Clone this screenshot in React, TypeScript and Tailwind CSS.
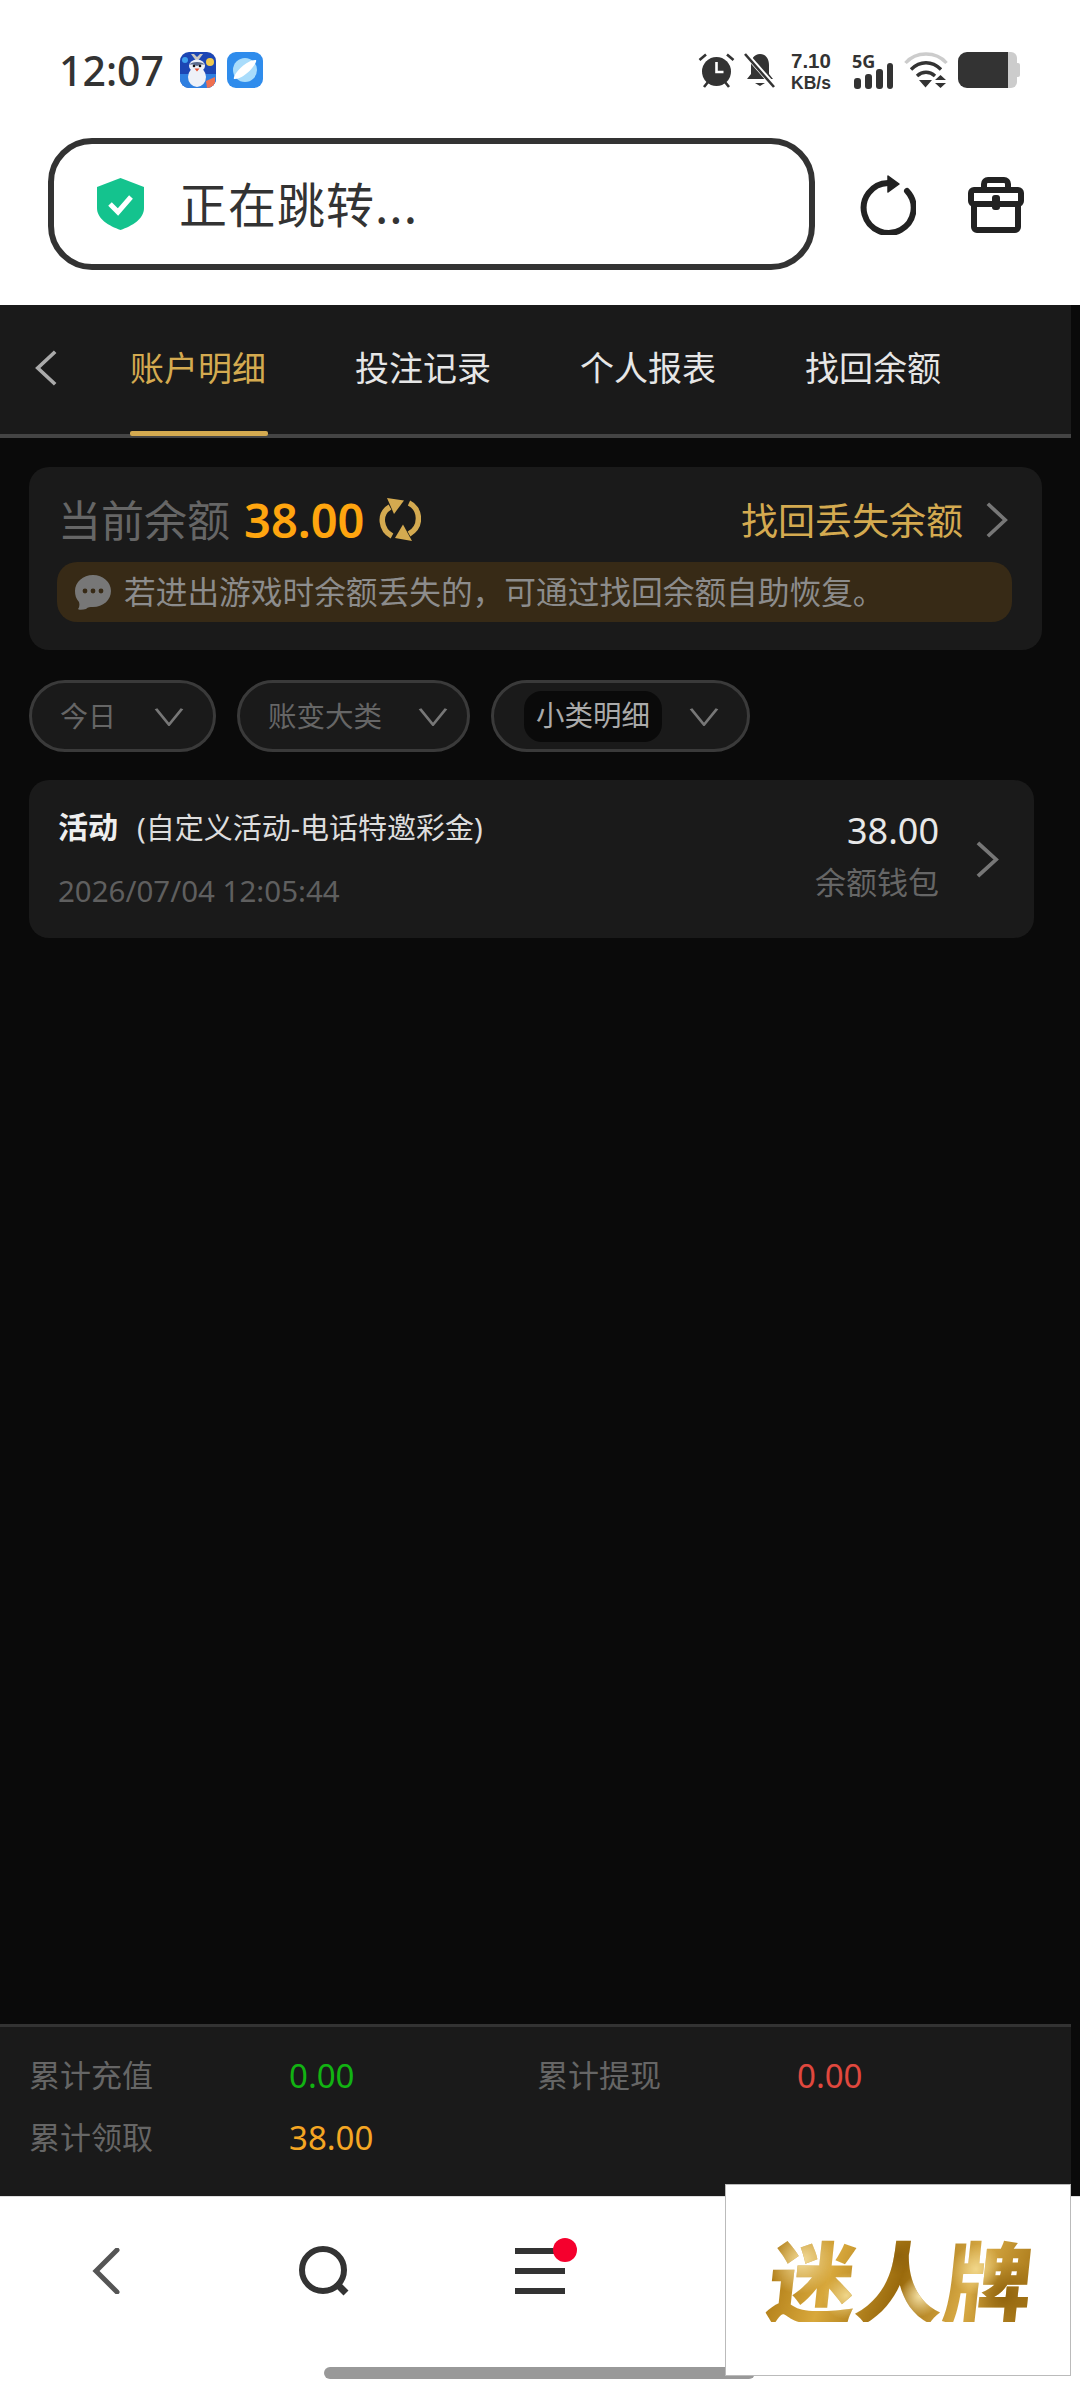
const Chevron = ({ dir = 'right', className = '' }: { dir?: 'left' | 'right' | 'down'; className?: string }) => {
  const points = dir === 'left' ? '22,2 3,20 22,38' : dir === 'right' ? '2,2 21,20 2,38' : '2,4 15,28 28,4'
  const box = dir === 'down' ? '0 0 30 30' : '0 0 24 40'
  return (
    <svg viewBox={box} preserveAspectRatio="none" className={className} fill="none" stroke="currentColor" strokeWidth={dir === 'down' ? 3 : 4}>
      <polyline points={points} />
    </svg>
  )
}

const tabs = ['账户明细', '投注记录', '个人报表', '找回余额']

function PenguinIcon() {
  return (
    <svg viewBox="0 0 36 36" className="w-[36px] h-[36px] rounded-[9px]">
      <rect width="36" height="36" fill="#1c46b4" />
      <rect y="22" width="36" height="14" fill="#2f7fe0" />
      <circle cx="30" cy="10" r="4" fill="#f0c94f" />
      <circle cx="5" cy="8" r="3" fill="#3fa0ee" />
      <path d="M26 29l9-4v11h-8z" fill="#ef7050" />
      <path d="M11 2l6 8 6-8-3 0-3 3-3-3z" fill="#c9c6c0" />
      <ellipse cx="17" cy="25" rx="9" ry="10" fill="#eef1f8" />
      <ellipse cx="17" cy="14" rx="8" ry="6.500" fill="#eef1f8" />
      <path d="M9 13c2-4 14-4 16 0-3-1-5 0-8 1-3-1-5-2-8-1z" fill="#5a6a8c" />
      <circle cx="14" cy="14" r="1.300" fill="#111" />
      <circle cx="20" cy="14" r="1.300" fill="#111" />
      <path d="M14.500 16.500h5l-2.500 3z" fill="#e8502f" />
    </svg>
  )
}

function PlanetIcon() {
  return (
    <svg viewBox="0 0 36 36" className="w-[36px] h-[36px] rounded-[9px] ml-[11px]">
      <rect width="36" height="36" fill="#2f8cec" />
      <circle cx="18" cy="18" r="12" fill="#a9dcfb" />
      <path d="M7 27C5 23 20 7 29 8c2 3-12 20-22 19z" fill="#fff" />
    </svg>
  )
}

function StatusIcons() {
  return (
    <div className="ml-auto mr-[60px] flex items-center text-[#333]">
      {/* alarm */}
      <svg viewBox="0 0 37 36" className="w-[37px] h-[36px]">
        <circle cx="18.500" cy="19.500" r="14.500" fill="#333" />
        <path d="M18.500 10v10h7" fill="none" stroke="#fff" strokeWidth="2.600" />
        <path d="M1.500 8L8 2.500M35.500 8L29 2.500M6 35l4-5M31 35l-4-5" stroke="#333" strokeWidth="2.600" />
      </svg>
      {/* muted bell */}
      <svg viewBox="0 0 32 36" className="w-[32px] h-[36px] ml-[9px]">
        <path d="M16 2c6 0 9 5 9 11v9l4 5H3l4-5v-9C7 7 10 2 16 2z" fill="#333" />
        <path d="M11 31h10l-5 3z" fill="#333" />
        <path d="M1 1l29 33" stroke="#fff" strokeWidth="5" />
        <path d="M1 2l29 33" stroke="#333" strokeWidth="2.600" />
      </svg>
      <div className="ml-[15px] w-[44px] pt-[2px] flex flex-col items-start font-bold font-['Liberation_Sans',sans-serif]">
        <span className="text-[20.500px] h-[20px] leading-[20px]">7.10</span>
        <span className="text-[17.500px] h-[18px] leading-[18px] mt-[3px]">KB/s</span>
      </div>
      <div className="ml-[17px] w-[40px] h-[37px] relative">
        <span className="absolute left-0 top-0 text-[18px] leading-[18px] font-bold">5G</span>
        <svg viewBox="0 0 40 26" className="absolute left-[2px] bottom-0 w-[40px] h-[26px]">
          <rect x="0" y="15" width="7" height="11" rx="3" fill="#333" />
          <rect x="11" y="11" width="7" height="15" rx="3" fill="#333" />
          <rect x="22" y="6" width="7" height="20" rx="3" fill="#333" />
          <rect x="33" y="0" width="6" height="26" rx="3" fill="#333" />
        </svg>
      </div>
      {/* wifi */}
      <svg viewBox="0 0 44 36" className="w-[44px] h-[36px] ml-[12px]" fill="none">
        <path d="M1.500 11C12-1 32-1 42.500 11" stroke="#ccc" strokeWidth="3.400" />
        <path d="M7 17.500c9-9 21-9 30 0" stroke="#333" strokeWidth="3.400" />
        <path d="M13 24c5.500-5 12.500-5 18 0" stroke="#333" strokeWidth="3.400" />
        <path d="M15 28h13l-6.500 7.500zM31 31h11l-5.500 5zM31 28h11l-5.500-5z" fill="#333" />
      </svg>
      {/* battery */}
      <div className="ml-[10px] flex items-center">
        <div className="w-[50px] h-[36px] bg-[#333] rounded-l-[9px]" />
        <div className="w-[9px] h-[36px] bg-[#ccc] rounded-r-[6px]" />
        <div className="w-[3px] h-[14px] bg-[#ccc] rounded-r-[2px]" />
      </div>
    </div>
  )
}

export default function App() {
  return (
    <div className="relative w-[1080px] h-[2400px] overflow-hidden flex flex-col bg-[#0a0a0a] font-['Noto_Sans','Noto_Sans_CJK_SC',sans-serif]">
      {/* browser top */}
      <div className="bg-white h-[305px] shrink-0">
        <div className="h-[140px] flex items-center pl-[59px]">
          <span className="text-[41px] font-medium text-[#333] leading-none mr-[16px]">12:07</span>
          <PenguinIcon />
          <PlanetIcon />
          <StatusIcons />
        </div>
        <div className="flex items-center pl-[48px]">
          <div className="w-[767px] h-[132px] -mt-[2px] border-[6px] border-[#333] rounded-[44px] flex items-center pl-[43px]">
            <svg viewBox="0 0 47 52" className="w-[47px] h-[52px]">
              <path d="M23.500 0L47 9v21c0 11-12 18-23.500 22C12 48 0 41 0 30V9z" fill="#14c38e" />
              <path d="M13 26l8 8 13-15" fill="none" stroke="#fff" strokeWidth="5" />
            </svg>
            <span className="ml-[35px] pb-[5px] text-[48px] leading-none tracking-[1px] text-[#333] font-['Noto_Sans_CJK_SC',sans-serif]">正在跳转...</span>
          </div>
          <svg viewBox="0 0 56 60" className="w-[56px] h-[60px] ml-[45px]" fill="none">
            <path d="M47 16A25 25 0 1 1 28 8" stroke="#222" strokeWidth="6" strokeLinecap="round" />
            <path d="M28 1l11 8-11 8z" fill="#222" stroke="#222" strokeWidth="1.500" strokeLinejoin="round" />
          </svg>
          <svg viewBox="0 0 56 56" className="w-[56px] h-[56px] ml-[52px]" fill="none" stroke="#222" strokeWidth="6">
            <path d="M16 11V7a4 4 0 0 1 4-4h16a4 4 0 0 1 4 4v4" />
            <rect x="3" y="13" width="50" height="14" rx="3" />
            <path d="M6 27v23a3 3 0 0 0 3 3h38a3 3 0 0 0 3-3V27" />
            <rect x="24" y="18" width="8" height="15" rx="3" fill="#222" stroke="none" />
          </svg>
        </div>
      </div>

      {/* tabs */}
      <div className="relative h-[133px] shrink-0 w-[1071px] bg-[#1a1a1a] border-b-[4px] border-[#444] flex items-center pb-[3px]">
        <Chevron dir="left" className="ml-[35px] w-[22px] h-[36px] text-[#aaa]" />
        <div className="ml-[73px] flex gap-[89px]">
          {tabs.map((tab, i) => (
            <span key={tab} className={`w-[136px] text-[34px] leading-none whitespace-nowrap ${i === 0 ? 'text-[#d4aa50]' : 'text-[#e6e6e6]'}`}>
              {tab}
            </span>
          ))}
        </div>
        <div className="absolute left-[130px] -bottom-[2px] w-[138px] h-[5px] rounded-[2px] bg-[#d4aa50]" />
      </div>

      {/* content */}
      <div className="flex-1 pl-[29px]">
        <div className="mt-[29px] w-[1013px] h-[183px] rounded-[20px] bg-[#1a1a1a] px-[29px] pt-[30px]">
          <div className="flex items-center h-[46px]">
            <span className="text-[43px] leading-none text-[#666]">当前余额</span>
            <span className="ml-[14px] text-[47px] leading-none font-semibold text-[#ffa50f]">38.00</span>
            <svg viewBox="0 0 42 44" className="ml-[14px] w-[42px] h-[44px] shrink-0" fill="none">
              <path d="M13 38C2 32-1 16 11 9" stroke="#d4aa50" strokeWidth="5.500" />
              <path d="M8 0l17 2.500L15 16z" fill="#d4aa50" />
              <path d="M30 5c11 5 14 23 0 31" stroke="#d4aa50" strokeWidth="5.500" />
              <path d="M33 43l-17-3 8-13.500z" fill="#d4aa50" />
            </svg>
            <span className="ml-auto text-[37px] leading-none text-[#d4aa50]">找回丢失余额</span>
            <Chevron className="ml-[23px] mr-[5px] w-[22px] h-[36px] text-[#777]" />
          </div>
          <div className="mt-[19px] w-[955px] -ml-[1px] h-[60px] rounded-[20px] bg-[#372a16] flex items-center pl-[17px]">
            <svg viewBox="0 0 38 36" className="w-[38px] h-[36px]">
              <path d="M19 1c10 0 18 7 18 16s-8 16-18 16c-3 0-5 0-7 2-3 1-8 1-8 0 1-1 2-4 1-7C2 25 1 21 1 17 1 8 9 1 19 1z" fill="#777" />
              <circle cx="11" cy="17" r="2.400" fill="#372a16" />
              <circle cx="19" cy="17" r="2.400" fill="#372a16" />
              <circle cx="27" cy="17" r="2.400" fill="#372a16" />
            </svg>
            <span className="ml-[12px] text-[31.700px] leading-none text-[#8c8c8c] whitespace-nowrap">若进出游戏时余额丢失的，可通过找回余额自助恢复。</span>
          </div>
        </div>

        {/* filters */}
        <div className="mt-[30px] flex gap-[21px]">
          <div className="w-[187px] h-[72px] rounded-[36px] border-[3px] border-[#3a3a3a] bg-[#1a1a1a] flex items-center pl-[28px]">
            <span className="text-[28px] leading-none text-[#666]">今日</span>
            <Chevron dir="down" className="ml-[38px] w-[30px] h-[20px] text-[#777]" />
          </div>
          <div className="w-[233px] h-[72px] rounded-[36px] border-[3px] border-[#3a3a3a] bg-[#1a1a1a] flex items-center pl-[28px]">
            <span className="text-[28.500px] leading-none text-[#666]">账变大类</span>
            <Chevron dir="down" className="ml-[36px] w-[30px] h-[20px] text-[#777]" />
          </div>
          <div className="w-[259px] h-[72px] rounded-[36px] border-[3px] border-[#3a3a3a] bg-[#1a1a1a] flex items-center pl-[30px]">
            <span className="w-[138px] h-[51px] rounded-[18px] bg-[#0a0a0a] flex items-center justify-center text-[28.500px] leading-none text-[#aaa] pb-[2px]">小类明细</span>
            <Chevron dir="down" className="ml-[27px] w-[30px] h-[20px] text-[#777]" />
          </div>
        </div>

        {/* record */}
        <div className="mt-[28px] w-[1005px] h-[158px] rounded-[20px] bg-[#1a1a1a] flex items-center pl-[29px]">
          <div className="flex-1 -mt-[3px]">
            <div className="flex items-center h-[36px]">
              <span className="text-[30px] leading-none font-bold text-[#eee]">活动</span>
              <span className="ml-[19px] text-[29px] leading-none text-[#ddd] whitespace-nowrap">(自定义活动-电话特邀彩金)</span>
            </div>
            <div className="mt-[31px] text-[29.500px] leading-none text-[#5f5f5f]">2026/07/04 12:05:44</div>
          </div>
          <div className="flex flex-col items-end w-[130px] -mt-[7px]">
            <span className="text-[36px] leading-none text-[#e8e8e8]">38.00</span>
            <span className="mt-[18px] text-[31px] leading-none text-[#666] whitespace-nowrap">余额钱包</span>
          </div>
          <Chevron className="ml-[37px] mr-[35px] w-[23px] h-[37px] text-[#777]" />
        </div>
      </div>

      {/* totals */}
      <div className="h-[172px] shrink-0 w-[1071px] bg-[#1a1a1a] border-t-[3px] border-[#333] pt-[17px] pl-[29px]">
        <div className="grid grid-cols-[260px_248px_260px_1fr] auto-rows-[62px] items-center">
          <span className="text-[31px] leading-none text-[#666]">累计充值</span>
          <span className="text-[33px] leading-none text-[#12b312]">0.00</span>
          <span className="text-[31px] leading-none text-[#666]">累计提现</span>
          <span className="text-[33px] leading-none text-[#e0483e]">0.00</span>
          <span className="text-[31px] leading-none text-[#666]">累计领取</span>
          <span className="text-[33px] leading-none text-[#f5a623]">38.00</span>
        </div>
      </div>

      {/* bottom bar */}
      <div className="h-[204px] shrink-0 bg-white border-t-[1px] border-[#ddd]">
        <div className="flex items-start pl-[92px] pt-[41px] h-[170px]">
          <svg viewBox="0 0 28 46" className="mt-[10px] w-[28px] h-[46px]" fill="none">
            <polyline points="25,2 4,23 25,44" stroke="#555" strokeWidth="5" strokeLinecap="round" />
          </svg>
          <svg viewBox="0 0 52 50" className="ml-[178px] mt-[8px] w-[52px] h-[50px]" fill="none">
            <circle cx="25" cy="24" r="21" stroke="#333" strokeWidth="6" />
            <path d="M38 37l10 10" stroke="#333" strokeWidth="7" />
          </svg>
          <div className="relative ml-[165px] mt-[10px] w-[50px] flex flex-col gap-[14px]">
            <div className="h-[6px] bg-[#333]" />
            <div className="h-[6px] bg-[#333]" />
            <div className="h-[6px] bg-[#333]" />
            <div className="absolute left-[38px] -top-[10px] w-[24px] h-[24px] rounded-full bg-[#f5002d]" />
          </div>
        </div>
        <div className="ml-[324px] w-[431px] h-[12px] rounded-full bg-[#999]" />
      </div>

      {/* floating logo */}
      <div className="absolute left-[725px] top-[2184px] w-[346px] h-[192px] bg-white border border-[#bbb] flex items-center justify-center pl-[6px] pb-[4px]">
        <span className="inline-block -skew-x-6 text-[88px] leading-none font-black whitespace-nowrap font-['Noto_Sans_CJK_SC',sans-serif] bg-[radial-gradient(circle_at_12%_30%,#f3dc9a_0,transparent_14%),radial-gradient(circle_at_30%_70%,#f0d68a_0,transparent_12%),radial-gradient(circle_at_48%_25%,#8f620c_0,transparent_12%),radial-gradient(circle_at_58%_70%,#f6e3a8_0,transparent_13%),radial-gradient(circle_at_78%_40%,#f0d68a_0,transparent_12%),radial-gradient(circle_at_90%_70%,#8f620c_0,transparent_14%),linear-gradient(105deg,#a8740f_0%,#d8a83c_25%,#9a6a0c_50%,#d8aa45_75%,#a06f10_100%)] bg-clip-text text-transparent">
          迷人牌
        </span>
      </div>
    </div>
  )
}
